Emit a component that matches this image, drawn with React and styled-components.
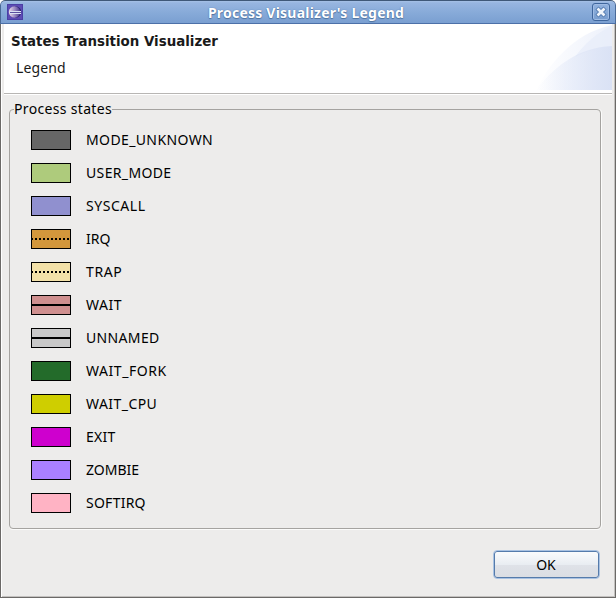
import React from 'react';
import styled, { createGlobalStyle } from 'styled-components';

const GlobalStyle = createGlobalStyle`
  * { box-sizing: border-box; }
  body { margin: 0; background: #fff; overflow: hidden; }
`;

const Dialog = styled.div`
  width: 616px;
  height: 598px;
  display: flex;
  flex-direction: column;
  overflow: hidden;
  border-radius: 5px 5px 0 0;
  background: #edeceb;
  font-family: "Noto Sans", sans-serif;
  font-size: 14px;
  line-height: 20px;
  color: #000;
  white-space: nowrap;
`;

const TitleBar = styled.header`
  height: 24px;
  flex: none;
  display: grid;
  grid-template-columns: 18px 1fr 18px;
  align-items: center;
  padding: 0 5px 0 6px;
  border: 1px solid #4a6a98;
  border-top-color: #3f5878;
  border-bottom-color: #4c70a8;
  border-radius: 5px 5px 0 0;
  background: linear-gradient(#a6c1e6 0, #97b5e0 2px, #88abd9 11px, #7a9fd1 100%);
`;

const Title = styled.h1`
  margin: 0;
  padding: 2px 5px 0 0;
  text-align: center;
  font-size: 14px;
  font-weight: 700;
  line-height: 20px;
  letter-spacing: 0.22px;
  color: #fff;
  text-shadow: 0 0 1px #3f639a, 0 1px 1px #50749f;
`;

const CloseButton = styled.button`
  width: 18px;
  height: 18px;
  padding: 0;
  border: 1px solid #3f669d;
  border-radius: 3px;
  background: linear-gradient(#91b2df, #789dce);
  box-shadow: inset 0 0 0 1px #a0bce4;
  display: grid;
  place-items: center;
`;

const Body = styled.div`
  flex: 1;
  display: flex;
  flex-direction: column;
  border: 1px solid #6b6967;
  border-top: 0;
  box-shadow: inset 1px 0 #fff, inset -1px -1px #c3c1bf;
  padding: 0 3px;
`;

const Banner = styled.section`
  height: 69px;
  flex: none;
  display: flex;
  justify-content: space-between;
  background: #fff;
`;

const BannerText = styled.div`
  padding: 7px 0 0 7px;
  color: #1a1a1a;
`;

const BannerTitle = styled.h2`
  margin: 0;
  padding-top: 1px;
  font-family: "DejaVu Sans", sans-serif;
  font-size: 13.4px;
  font-weight: 700;
  line-height: 20px;
`;

const BannerMessage = styled.p`
  margin: 6px 0 0 5px;
  letter-spacing: 0.1px;
`;

const Divider = styled.div`
  height: 2px;
  flex: none;
  background: #b8b6b4;
  border-bottom: 1px solid #fff;
`;

const Group = styled.fieldset`
  margin: 4px 11px 0 5px;
  padding: 11px 0 0 21px;
  height: 430px;
  flex: none;
  min-width: 0;
  border: 1px solid #a5a3a0;
  border-radius: 4px;
  box-shadow: 0 1px #fbfbfa, 1px 0 #fbfbfa;
`;

const GroupLabel = styled.legend`
  margin-left: -17px;
  padding: 0;
  line-height: 20px;
  letter-spacing: 0.33px;
`;

const StateRow = styled.div`
  height: 20px;
  margin-bottom: 13px;
  display: flex;
  align-items: center;
  gap: 15px;
`;

const Swatch = styled.span`
  width: 40px;
  height: 20px;
  border: 1px solid #000;
  background: ${(p) => p.$color};
  display: flex;
  align-items: center;
`;

const Stroke = styled.span`
  flex: 1;
  height: 2px;
  background: ${(p) =>
    p.$kind === 'dotted'
      ? 'repeating-linear-gradient(90deg, #000 0 1px, transparent 1px 3px, #000 3px 4px)'
      : '#000'};
`;

const StateName = styled.span`
  letter-spacing: ${(p) => p.$tracking}px;
`;

const Footer = styled.footer`
  flex: 1;
  display: flex;
  justify-content: flex-end;
  padding: 21px 12px 0 0;
`;

const OkButton = styled.button`
  width: 107px;
  height: 29px;
  padding: 1px 1px 0 0;
  border: 1px solid #a9c2e2;
  border-radius: 4px;
  background: linear-gradient(#fbfcfd, #e9edf2 50%, #dfe2e8 51%, #dadde3);
  box-shadow: inset 0 0 0 1px #557bab;
  font: inherit;
  color: #000;
`;

const STATES = [
  { name: 'MODE_UNKNOWN', color: '#666666', tracking: 0.38 },
  { name: 'USER_MODE', color: '#aecb7c', tracking: 0.36 },
  { name: 'SYSCALL', color: '#9090cf', tracking: 0.55 },
  { name: 'IRQ', color: '#d3973c', line: 'dotted', tracking: 0 },
  { name: 'TRAP', color: '#f3e1a8', line: 'dotted', tracking: 0.6 },
  { name: 'WAIT', color: '#cf8f8f', line: 'solid', tracking: 0.55 },
  { name: 'UNNAMED', color: '#c8c8c8', line: 'solid', tracking: 0.35 },
  { name: 'WAIT_FORK', color: '#236b2a', tracking: 0.55 },
  { name: 'WAIT_CPU', color: '#cfce00', tracking: 0.45 },
  { name: 'EXIT', color: '#ce00ce', tracking: 0.25 },
  { name: 'ZOMBIE', color: '#aa80ff', tracking: 0 },
  { name: 'SOFTIRQ', color: '#ffb3c4', tracking: 0.25 },
];

function EclipseIcon() {
  return (
    <svg width="16" height="16" viewBox="0 0 16 16">
      <defs>
        <linearGradient id="orb" x1="0" x2="1">
          <stop offset="0" stopColor="#eddfe9" />
          <stop offset="0.45" stopColor="#a595c8" />
          <stop offset="1" stopColor="#4a3a92" />
        </linearGradient>
      </defs>
      <rect width="16" height="16" fill="#4b3fa5" />
      <rect x="1" y="1" width="14" height="14" fill="#5d4bb4" />
      <circle cx="8.5" cy="8" r="5.8" fill="#2e2270" />
      <circle cx="7.5" cy="8" r="5.7" fill="url(#orb)" />
      <path d="M3 7.5h11M3 9.5h11" stroke="#dce3f5" />
      <path d="M3 8.5h11" stroke="#5b4f9e" />
    </svg>
  );
}

function CloseIcon() {
  return (
    <svg width="12" height="12" viewBox="0 0 12 12">
      <path d="M2 2l8 8M10 2l-8 8" stroke="#4b73aa" strokeWidth="4.4" />
      <path d="M2.5 2.5l7 7M9.5 2.5l-7 7" stroke="#f0f5fb" strokeWidth="2.8" />
    </svg>
  );
}

function BannerArt() {
  return (
    <svg width="76" height="69" viewBox="0 0 74 69" preserveAspectRatio="none">
      <defs>
        <linearGradient id="sweep" x1="0" x2="1">
          <stop offset="0" stopColor="#fff" />
          <stop offset="0.5" stopColor="#f6f8fd" />
          <stop offset="1" stopColor="#edf1fb" />
        </linearGradient>
        <linearGradient id="inner" x1="0" x2="1">
          <stop offset="0" stopColor="#dbe3f6" stopOpacity="0" />
          <stop offset="1" stopColor="#dae2f5" />
        </linearGradient>
      </defs>
      <path d="M0 66C12 42 34 10 74 1V66Z" fill="url(#sweep)" />
      <path d="M38 33C46 21 60 8 74 2V22C61 23 48 27 38 33Z" fill="#e7edf9" opacity="0.7" />
      <path d="M0 66C16 45 38 24 74 22V66Z" fill="url(#inner)" />
    </svg>
  );
}

export default function App() {
  return (
    <>
      <GlobalStyle />
      <Dialog>
        <TitleBar>
          <EclipseIcon />
          <Title>Process Visualizer's Legend</Title>
          <CloseButton aria-label="Close"><CloseIcon /></CloseButton>
        </TitleBar>
        <Body>
          <Banner>
            <BannerText>
              <BannerTitle>States Transition Visualizer</BannerTitle>
              <BannerMessage>Legend</BannerMessage>
            </BannerText>
            <BannerArt />
          </Banner>
          <Divider />
          <Group>
            <GroupLabel>Process states</GroupLabel>
            {STATES.map((s) => (
              <StateRow key={s.name}>
                <Swatch $color={s.color}>{s.line && <Stroke $kind={s.line} />}</Swatch>
                <StateName $tracking={s.tracking}>{s.name}</StateName>
              </StateRow>
            ))}
          </Group>
          <Footer><OkButton>OK</OkButton></Footer>
        </Body>
      </Dialog>
    </>
  );
}
